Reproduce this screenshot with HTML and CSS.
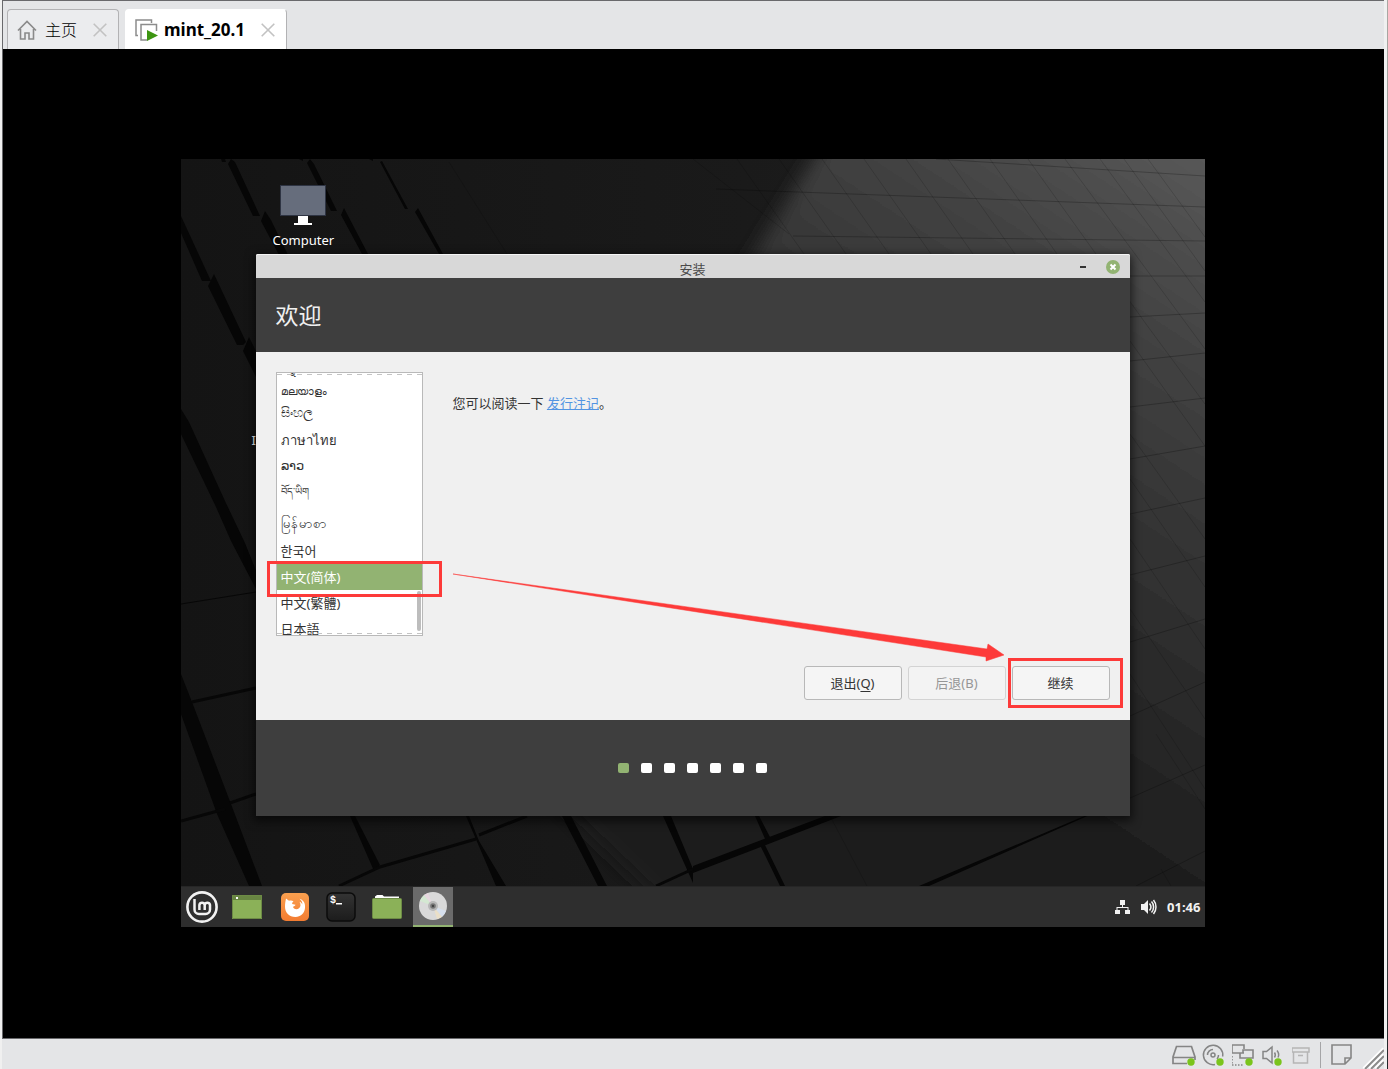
FILE: index.html
```html
<!DOCTYPE html>
<html lang="zh-CN">
<head>
<meta charset="utf-8">
<meta name="viewport" content="width=device-width, initial-scale=1">
<title>mint_20.1</title>
<link rel="stylesheet" href="styles.css">
</head>
<body>
<div class="app">
  <nav class="tabs" aria-label="虚拟机">
    <div class="tab">
      <button class="tab-name tab-home" type="button">
        <svg width="20" height="20" viewBox="0 0 20 20" fill="none" stroke="#8a8a8a" stroke-width="1.6"><path d="M1 10.5 10 1.5l9 9M3.500 9v10h4.500v-6h4v6h4.500V9"/></svg>
        <span>主页</span>
      </button>
      <button class="tab-close" type="button" aria-label="关闭">
        <svg width="14" height="14" viewBox="0 0 14 14" stroke="#c2c2c2" stroke-width="1.6"><path d="M.7.700l12.600 12.600M13.300.700.700 13.300"/></svg>
      </button>
    </div>
    <div class="tab tab-active">
      <button class="tab-name" type="button">
        <svg width="23" height="22" viewBox="0 0 23 22"><path d="M3 16.500H1V1h15.500v3" fill="none" stroke="#8c8c8c" stroke-width="1.500"/><path d="M12 21H6V5.500h15.500V12" fill="none" stroke="#8c8c8c" stroke-width="1.500"/><path d="M12 11l11 5.500L12 22z" fill="#3d9511"/></svg>
        <span>mint_20.1</span>
      </button>
      <button class="tab-close" type="button" aria-label="关闭">
        <svg width="14" height="14" viewBox="0 0 14 14" stroke="#c2c2c2" stroke-width="1.6"><path d="M.7.700l12.600 12.600M13.300.700.700 13.300"/></svg>
      </button>
    </div>
  </nav>

  <main class="stage">
    <div class="screen">
      <svg class="wallpaper" viewBox="0 0 1024 768" preserveAspectRatio="none" aria-hidden="true">
        <defs>
          <linearGradient id="base" x1="0" y1="0" x2="1" y2="0"><stop offset="0" stop-color="#141414"/><stop offset=".55" stop-color="#1a1a1a"/><stop offset="1" stop-color="#202020"/></linearGradient>
          <linearGradient id="light" gradientUnits="userSpaceOnUse" x1="1024" y1="0" x2="680" y2="520"><stop offset="0" stop-color="#585858"/><stop offset=".25" stop-color="#444"/><stop offset=".55" stop-color="#333"/><stop offset="1" stop-color="#1e1e1e"/></linearGradient>
          <filter id="soft" x="-10%" y="-10%" width="120%" height="120%"><feGaussianBlur stdDeviation="9"/></filter>
        </defs>
        <rect width="1024" height="768" fill="url(#base)"/>
        <path d="M652-30 560 115 330 600 560 820H1070V-30z" fill="url(#light)" filter="url(#soft)"/>
        <g fill="#060606">
          <path d="M40 0h4l1 3h-4zM118 0h4v2zM188 0h4v2z"/>
          <path d="M47 5l3-5 4 3 25 54h-7zM126 4l3-4 4 5 23 47h-6zM199 3l2-1 26 48h-3zM0 57l30 65h-9L0 74zM80 62l4-10 6 9 17 35h-9zM160 56l3-7 24 46h-6zM234 53l3-4 25 46h-4zM27 127l6-12 32 68-3 3h-6zM62 192l6-14 7 14v26zM0 250l8 13 36 79 20 42 12 30v18l-26-50-15-34L0 275z"/>
          <path d="M0 515l11 28 39 102 31 82H68L36 655 0 555zM174 657l25 49-6 6-24-55zM288 657l10 25 27 45h-10l-30-70zM381 657h9l36 70h-9zM482 657h8l22 53v14zM574 657h4l12 23-5 2zM579 686l4-2 21 43h-5zM738 727l170-72 12-4-172 76zM512 707l132-50h16L512 714z"/>
        </g>
        <g fill="none" stroke="#070707" stroke-width="3">
          <path d="M11 543l64-14M49 644l26-9M0 662l44-12M298 676l48-19M158 727l41-19 96-28M475 727l37-17"/>
          <path d="M0 445l75-12" stroke-width="1"/>
        </g>
        <g fill="none" stroke="#000" stroke-opacity=".24" stroke-width="1">
          <path d="M755 0l269 17M535 30l489 18M612 77l412 5M949 117h75M949 158l75-4M949 202l75-8M949 248l75-9M949 300l75-13M949 355l75-16M949 416l75-19M949 483l75-23M949 557l75-34M949 639l75-33M955 727l69-35"/>
        </g>
        <g fill="none" stroke="#000" stroke-opacity=".15" stroke-width="1">
          <path d="M268 3l58 92M512 0l96 75M556 0l67 95M598 0l67 95M641 0l67 95M683 0l67 95M725 0l67 95M767 0l67 95M809 0l67 95M847 0l118 165 59 80M884 0l140 190M919 0l105 143M943 0l81 112M967 0l57 78M949 275l75 105M949 182l75 105M949 320l75 108M949 380l75 110M949 450l75 110M949 515l75 115M975 575l49 75M649 657l37 70M980 710l10 17"/>
        </g>
      </svg>

      <section class="desktop">
        <a class="launcher" href="#computer">
          <svg width="46" height="42" viewBox="0 0 46 42"><rect x=".5" y=".5" width="45" height="30" fill="#666d7c" stroke="#2e3443"/><path d="M18 31h10v7h4v2H14v-2h4z" fill="#fff"/></svg>
          <span>Computer</span>
        </a>
        <a class="launcher launcher-install" href="#install">Install</a>

        <section class="window" aria-label="安装">
          <header class="titlebar">
            <span class="title">安装</span>
            <span class="window-buttons">
              <button type="button" aria-label="最小化"><svg width="14" height="14" viewBox="0 0 14 14"><path d="M4 6h6v2H4z" fill="#333"/></svg></button>
              <button type="button" aria-label="关闭"><svg width="14" height="14" viewBox="0 0 14 14"><circle cx="7" cy="7" r="7" fill="#92b372"/><path d="M4.500 4.500l5 5m0-5l-5 5" stroke="#fff" stroke-width="2"/></svg></button>
            </span>
          </header>
          <h1 class="heading">欢迎</h1>
          <div class="content">
            <div class="columns">
              <div class="language-box">
                <select class="languages" size="11" aria-label="语言">
                  <option class="kannada">ಕನ್ನಡ</option>
                  <option class="malayalam">മലയാളം</option>
                  <option class="sinhala">සිංහල</option>
                  <option>ภาษาไทย</option>
                  <option>ລາວ</option>
                  <option class="tibetan">བོད་ཡིག</option>
                  <option class="burmese">မြန်မာစာ</option>
                  <option>한국어</option>
                  <option selected>中文(简体)</option>
                  <option>中文(繁體)</option>
                  <option>日本語</option>
                </select>
              </div>
              <p class="notes">您可以阅读一下 <a href="#notes">发行注记</a>。</p>
            </div>
            <div class="actions">
              <button type="button">退出(<u>Q</u>)</button>
              <button type="button" disabled>后退(B)</button>
              <button type="button">继续</button>
            </div>
          </div>
          <footer class="steps" aria-label="第 1 步，共 7 步">
            <i class="step current"></i><i class="step"></i><i class="step"></i><i class="step"></i><i class="step"></i><i class="step"></i><i class="step"></i>
          </footer>
        </section>
      </section>

      <footer class="panel">
        <button class="menu" type="button" aria-label="菜单">
          <svg width="32" height="32" viewBox="0 0 32 32" fill="none" stroke="#f2f2f2"><circle cx="16" cy="16" r="14.600" stroke-width="2.600"/><path d="M8.500 8v10.500a4.500 4.500 0 0 0 4.500 4.500h6.500a4.500 4.500 0 0 0 4.500-4.500V14a2.700 2.700 0 0 0-5.300 0v5M18.700 14a2.700 2.700 0 0 0-5.300 0v5" stroke-width="2.500"/></svg>
        </button>
        <button class="show-desktop" type="button" aria-label="显示桌面">
          <svg width="30" height="24" viewBox="0 0 30 24"><rect width="30" height="24" fill="#8bb158"/><path d="M0 0h30v5H0z" fill="#688542"/><path d="M.5.500h29v23H.5z" fill="none" stroke="#6d8b45"/><rect x="4" y="2" width="2" height="2" fill="#fff"/></svg>
        </button>
        <button type="button" aria-label="Firefox">
          <svg width="30" height="30" viewBox="0 0 30 30"><defs><linearGradient id="fox" x2="0" y2="1"><stop stop-color="#faa04f"/><stop offset="1" stop-color="#f37c31"/></linearGradient></defs><rect x="1" y="1" width="28" height="28" rx="5" fill="url(#fox)"/><path d="M6 6.500l3 2.300c2-.6 3.500-.2 4.500.7-1 .6-1.500 1.500-1.300 2.500l3.300.7c-.3 1.300-1.500 1.500-2.500 2 .3 2.300 3.700 3.300 6 1.600 1.800-1.500 2-4 .5-6.500 1.700.5 2.500 1.700 2.800 2.700.2-2.500-.8-4.300-2.800-5.800 4.500 1.300 6 5 5.500 9.300C24.500 21.500 20.500 25 15.500 25 9 25 5 20.500 5 14.800 5 11.500 5.500 9 6 6.500z" fill="#fff"/></svg>
        </button>
        <button type="button" aria-label="终端">
          <svg width="30" height="30" viewBox="0 0 30 30"><defs><linearGradient id="term" x2="0" y2="1"><stop stop-color="#343434"/><stop offset="1" stop-color="#1c1c1c"/></linearGradient></defs><rect x="1" y="1" width="28" height="28" rx="5" fill="url(#term)" stroke="#0b0b0b" stroke-width="1.500"/><text x="4" y="11" class="prompt">$</text><path d="M10 11h6v1.500h-6z" fill="#fff"/></svg>
        </button>
        <button type="button" aria-label="文件">
          <svg width="30" height="26" viewBox="0 0 30 26"><path d="M3 5V2.500L5 1h5.500l1.500 1.500h15V5z" fill="#fff"/><rect x=".5" y="4.500" width="29" height="20" rx="1" fill="#8bb158" stroke="#6d8b45"/></svg>
        </button>
        <button class="running" type="button" aria-label="安装">
          <svg width="30" height="30" viewBox="0 0 30 30"><circle cx="15" cy="15" r="14" fill="#d9d9d9"/><path d="M15 15L6 4a14 14 0 0 0-4 6z" fill="#d4e8d2"/><path d="M15 15L6 4l4-2z" fill="#e7d7df"/><path d="M15 15l13 5a14 14 0 0 1-4 6z" fill="#d5dfed"/><path d="M15 15l9 11-5 2z" fill="#eadfc8"/><circle cx="15" cy="15" r="5" fill="#b7b7b7"/><circle cx="15" cy="15" r="2.800" fill="#777"/><circle cx="15" cy="15" r="1.200" fill="#444"/></svg>
        </button>
        <span class="tray">
          <svg width="16" height="16" viewBox="0 0 16 16" fill="#f2f2f2"><path d="M5 1h5v5H8v2h5.500v3H15v4h-5v-4h2.500V9h-10v2H5v4H0v-4h1.500V8H7V6H5z"/></svg>
          <svg width="16" height="16" viewBox="0 0 16 16"><path d="M0 5h3l4-4v14l-4-4H0z" fill="#f2f2f2"/><path d="M8.500 4.500c1.700 2 1.700 5 0 7M10.500 2.500c2.800 3 2.800 8 0 11M12.500 1c3.300 4 3.300 10 0 14" fill="none" stroke="#f2f2f2" stroke-width="1.500"/></svg>
          <time>01:46</time>
        </span>
      </footer>

      <svg class="markup" viewBox="0 0 1024 768" preserveAspectRatio="none" aria-hidden="true">
        <g fill="none" stroke="#fd3a39" stroke-width="3"><rect x="87.500" y="403.500" width="172" height="33"/><rect x="828.500" y="500.500" width="112" height="47"/></g>
        <path d="M272 415L806 490l1-5 16 11-18 6v-4z" fill="#fd3a39" stroke="#fd3a39" stroke-width=".5"/>
      </svg>
    </div>
  </main>

  <footer class="statusbar">
    <button type="button" aria-label="硬盘"><svg width="24" height="24" viewBox="0 0 24 24"><path d="M15 20.500H1V14L4.500 3.500h15L23 14v3M1 14.500h22" fill="none" stroke="#858585" stroke-width="1.700"/><circle class="on" cx="19" cy="19" r="3.700"/></svg></button>
    <button type="button" aria-label="光盘"><svg width="24" height="24" viewBox="0 0 24 24"><g fill="none" stroke="#858585" stroke-width="1.500"><path d="M13 21.500A9.700 9.700 0 1 1 20.700 13.500"/><circle cx="11" cy="12" r="2"/><path d="M5.500 12A5.500 5.500 0 0 1 11 6.500M16.500 12a5.500 5.500 0 0 1-1.500 4"/></g><circle class="on" cx="18" cy="19" r="3.700"/></svg></button>
    <button type="button" aria-label="网络"><svg width="24" height="24" viewBox="0 0 24 24"><g fill="none" stroke="#858585" stroke-width="1.600"><path d="M7 10H0V2h12v4M11 7h10v8H8v-5h3zM7 10h5M11 7v3"/><path d="M0 13v9h12" stroke-dasharray="1.500 1.500"/></g><circle class="on" cx="17" cy="19" r="3.700"/></svg></button>
    <button type="button" aria-label="声音"><svg width="24" height="24" viewBox="0 0 24 24"><g fill="none" stroke="#858585" stroke-width="1.500"><path d="M1 8.500h3.500L10 4v16l-5.500-4.500H1z"/><path d="M12.500 9.500c1 1.500 1 3.500 0 5M15 7.500c2 2.500 2 5 1 7"/></g><circle class="on" cx="16" cy="19" r="3.700"/></svg></button>
    <button type="button" aria-label="共享"><svg width="24" height="24" viewBox="0 0 24 24" fill="none" stroke="#b5b5b5" stroke-width="1.500"><path d="M0 5h17v4H0zM1.500 9v11h14V9M6 12.500h5"/></svg></button>
    <span class="divider"></span>
    <button type="button" aria-label="消息"><svg width="24" height="24" viewBox="0 0 24 24" fill="none" stroke="#858585" stroke-width="1.600"><path d="M2 2h19v13l-6 6H2zM21 15h-6v6"/></svg></button>
    <svg class="grip" width="22" height="22" viewBox="0 0 22 22"><path d="M2 22L22 2M8 22L22 8M14 22l8-8" stroke="#fff" stroke-width="4"/><path d="M3 22L22 3M9 22L22 9M15 22l7-7" stroke="#8b8b8b" stroke-width="2"/></svg>
  </footer>
</div>
</body>
</html>
```
FILE: styles.css
```css
* { box-sizing: border-box; }

body {
  margin: 0;
  background: #f0f0f0;
  color: #333;
  font: 13px/20px "Noto Sans", "Noto Sans CJK SC", sans-serif;
}

button {
  margin: 0;
  padding: 0;
  border: 0;
  background: none;
  color: inherit;
  font: inherit;
}

svg { display: block; flex: none; }

.app {
  display: flex;
  flex-direction: column;
  min-height: 100vh;
  padding: 0 4px 0 2px;
  background: linear-gradient(#aaa8a4, #7d7b78 60%, #202428) right / 1px 100% no-repeat;
}

/* Tab strip */
.tabs {
  display: flex;
  align-items: flex-end;
  gap: 6px;
  height: 49px;
  padding-left: 4px;
  border-top: 1px solid #69696c;
  border-left: 1px solid #69696c;
  background: #e4e5e7;
}

.tab {
  display: flex;
  align-items: center;
  gap: 16px;
  height: 40px;
  padding: 0 11px 0 9px;
  border: 1px solid #b2b2b4;
  border-bottom: 0;
  border-radius: 4px 4px 0 0;
  background: #ebecee;
  color: #000;
}

.tab-active {
  border-color: #fff #b2b2b4 #fff #fff;
  background: #fff;
  font-weight: 700;
}

.tab-name {
  display: flex;
  align-items: center;
  gap: 6px;
  font-size: 17px;
}

.tab-home {
  gap: 8px;
  font-size: 16px;
  font-weight: 300;
}

/* Guest display */
.stage {
  display: flex;
  flex: 1;
  align-items: center;
  justify-content: center;
  padding: 0 2px 2px 0;
  border-left: 1px solid #69696c;
  background: #000;
}

.screen {
  position: relative;
  display: flex;
  flex-direction: column;
  width: 100%;
  max-width: 1024px;
  min-height: 768px;
}

.wallpaper,
.markup {
  position: absolute;
  inset: 0;
  width: 100%;
  height: 100%;
}

.markup { pointer-events: none; }

.desktop {
  position: relative;
  flex: 1;
  overflow: hidden;
}

.launcher {
  position: absolute;
  top: 26px;
  left: 92px;
  display: flex;
  flex-direction: column;
  align-items: center;
  gap: 3px;
  color: #fff;
  text-decoration: none;
}

.launcher-install {
  top: 271px;
  left: 71px;
}

.window {
  position: absolute;
  top: 95px;
  right: 75px;
  left: 75px;
  border-radius: 2px 2px 0 0;
  background: #f0f0f0;
  box-shadow: 0 3px 10px 2px rgba(0, 0, 0, .6);
}

.titlebar {
  display: grid;
  grid-template-columns: 1fr auto 1fr;
  align-items: center;
  height: 24px;
  padding: 0 10px;
  border-top: 1px solid #f4f4f4;
  border-radius: 2px 2px 0 0;
  background: #d8d8d8;
  color: #4a4a4a;
}

.title {
  grid-column: 2;
  padding-top: 4px;
}

.window-buttons {
  display: flex;
  gap: 16px;
  justify-self: end;
}

.heading {
  margin: 0;
  padding: 20px;
  background: #3e3e3e;
  color: #f0f0f0;
  font-size: 23px;
  font-weight: 400;
  line-height: 34px;
}

.content { padding: 20px; }

.columns {
  display: flex;
  gap: 30px;
}

.language-box {
  position: relative;
  flex: none;
  width: 147px;
  height: 264px;
  border: 1px solid #b9b9b9;
  background: #fff;
}

/* Dashed edges show that the list goes on above and below. */
.language-box::before {
  content: "";
  position: absolute;
  inset: 1px 0;
  background:
    repeating-linear-gradient(90deg, #c4c4c4 0 5px, transparent 5px 10px) top / 100% 1px no-repeat,
    repeating-linear-gradient(90deg, #c4c4c4 0 5px, transparent 5px 10px) bottom / 100% 1px no-repeat;
  pointer-events: none;
}

/* Scroll thumb */
.language-box::after {
  content: "";
  position: absolute;
  right: 1px;
  bottom: 4px;
  width: 4px;
  height: 40px;
  border-radius: 2px;
  background: #bdbdbd;
}

.languages {
  display: block;
  width: 100%;
  height: 100%;
  padding: 0;
  border: 0;
  outline: 0;
  overflow: hidden;
  background: transparent;
  color: #333;
  font: inherit;
  scrollbar-width: none;
}

.languages option {
  height: 26px;
  min-height: 0;
  padding: 3px 4px 0;
}

.languages option:checked {
  background: #92b372 linear-gradient(#92b372, #92b372);
  color: #fff;
}

.languages .kannada { margin-top: -20px; padding-top: 6px; }
.languages .malayalam { height: 24px; padding-top: 4px; font-size: 11px; }
.languages .sinhala { height: 24px; padding-top: 0; }
.languages .tibetan { height: 31px; padding-top: 1px; font-size: 10px; }
.languages .burmese { height: 28px; padding-top: 4px; }

.notes { margin: 21px 0 0; }
.notes a { color: #5294e2; }

.actions {
  display: flex;
  justify-content: flex-end;
  gap: 6px;
  margin-top: 30px;
}

.actions button {
  width: 98px;
  height: 34px;
  border: 1px solid #b8b8b8;
  border-radius: 3px;
  background: #f5f5f5;
}

.actions button:disabled {
  border-color: #d3d3d3;
  background: #f3f3f3;
  color: #969696;
}

.actions u { text-underline-offset: 3px; }

.steps {
  display: flex;
  align-items: center;
  justify-content: center;
  gap: 12px;
  height: 96px;
  background: #3e3e3e;
}

.step {
  width: 11px;
  height: 10px;
  border-radius: 2px;
  background: #fff;
}

.current { background: #92b372; }

/* Guest panel */
.panel {
  position: relative;
  display: flex;
  height: 41px;
  border-top: 1px solid #262626;
  background: #2e2e2e;
}

.panel button {
  display: flex;
  align-items: center;
  justify-content: center;
  width: 46px;
}

.panel .menu { width: 42px; }
.panel .show-desktop { width: 49px; }

.panel .running {
  width: 40px;
  margin-left: 3px;
  border-bottom: 2px solid #92b372;
  background: #6b6b6b;
}

.prompt {
  fill: #fff;
  font: 700 10px "Liberation Mono", monospace;
}

.tray {
  display: flex;
  align-items: center;
  gap: 10px;
  margin-left: auto;
  padding-right: 4px;
  color: #f2f2f2;
  font-weight: 700;
}

/* Host status bar */
.statusbar {
  display: flex;
  align-items: center;
  justify-content: flex-end;
  gap: 6px;
  height: 31px;
  padding-top: 1px;
  border-top: 1px solid #69696c;
  background: #e4e5e7;
}

.on { fill: #7ac41c; }

.divider {
  width: 1px;
  height: 26px;
  margin: 0 3px 0 -2px;
  background: #a5a5a7;
}

.grip {
  align-self: flex-end;
  margin-left: 2px;
}
```
